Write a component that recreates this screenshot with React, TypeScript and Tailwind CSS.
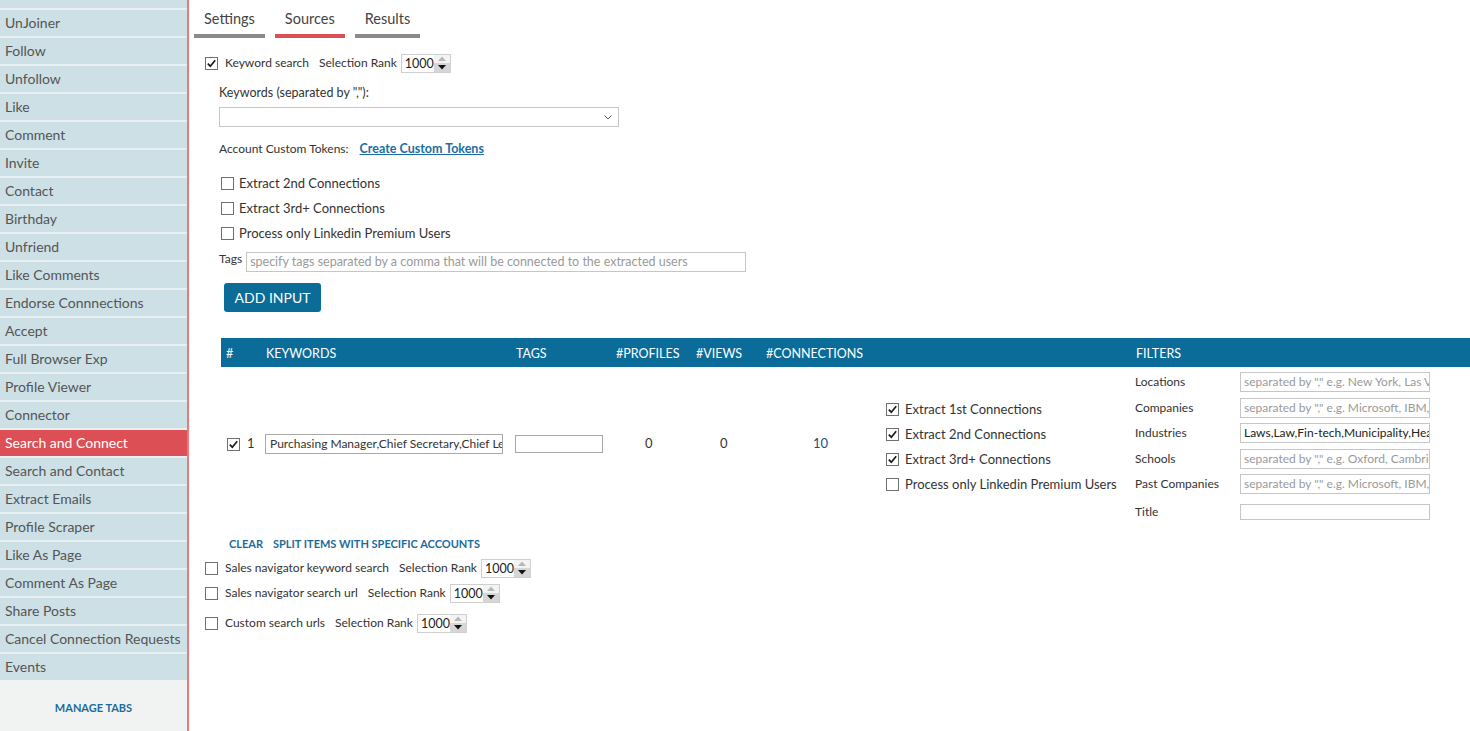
import React from 'react';

const sideItems = [
  'UnJoiner', 'Follow', 'Unfollow', 'Like', 'Comment', 'Invite', 'Contact', 'Birthday', 'Unfriend',
  'Like Comments', 'Endorse Connnections', 'Accept', 'Full Browser Exp', 'Profile Viewer', 'Connector',
  'Search and Connect', 'Search and Contact', 'Extract Emails', 'Profile Scraper', 'Like As Page',
  'Comment As Page', 'Share Posts', 'Cancel Connection Requests', 'Events',
];

const Check: React.FC<{ on?: boolean }> = ({ on }) => (
  <span className="w-[13px] h-[13px] border border-[#707070] bg-white flex items-center justify-center shrink-0">
    {on && (
      <svg width="11" height="11" viewBox="0 0 11 11">
        <path d="M1.8 5.6 L4.3 8.2 L9.2 2.2" fill="none" stroke="#1a1a1a" strokeWidth="1.7" />
      </svg>
    )}
  </span>
);

const Spinner: React.FC = () => (
  <div className="flex h-[19px] w-[50px] border border-[#cfcfcf] bg-white">
    <span className="flex-1 pl-[3px] leading-[17px] text-[12.5px] text-[#222]">1000</span>
    <div className="w-[16px] flex flex-col">
      <div className="h-[8px] flex items-center justify-center bg-[#f3f3f3]">
        <svg width="8" height="5" viewBox="0 0 8 5"><path d="M0 5 L4 0.5 L8 5 Z" fill="#b8b8b8" /></svg>
      </div>
      <div className="flex-1 flex items-center justify-center bg-[#d6d6d6]">
        <svg width="8" height="5" viewBox="0 0 8 5"><path d="M0 0 L4 4.5 L8 0 Z" fill="#111" /></svg>
      </div>
    </div>
  </div>
);

const filters: { label: string; text: string; filled?: boolean }[] = [
  { label: 'Locations', text: 'separated by "," e.g. New York, Las Vegas' },
  { label: 'Companies', text: 'separated by "," e.g. Microsoft, IBM, Google' },
  { label: 'Industries', text: 'Laws,Law,Fin-tech,Municipality,Health care', filled: true },
  { label: 'Schools', text: 'separated by "," e.g. Oxford, Cambridge' },
  { label: 'Past Companies', text: 'separated by "," e.g. Microsoft, IBM, Google' },
];

const SourceRow: React.FC<{ label: string; on?: boolean; className?: string }> = ({ label, on, className }) => (
  <div className={'h-[20px] flex items-center text-[12px] ' + (className ?? '')}>
    <Check on={on} />
    <span className="ml-[7px]">{label}</span>
    <span className="ml-[10px] mr-[4px]">Selection Rank</span>
    <Spinner />
  </div>
);

const App: React.FC = () => {
  return (
    <div className="w-[1470px] h-[731px] overflow-hidden flex bg-white text-[#333] font-['Lato',sans-serif] text-[13px]">
      {/* Sidebar */}
      <aside className="w-[189px] shrink-0 flex flex-col bg-[#f1f3f3] border-r-2 border-[#e97a7a]">
        <div className="-mt-[18px] flex flex-col">
          <div className="h-[26px] bg-[#cde0e6] px-[5px] leading-[26px] text-[14px] text-[#555]">Joiner</div>
          {sideItems.map((s) => (
            <div
              key={s}
              className={
                'h-[28px] border-t-2 border-[#e6eff2] px-[5px] leading-[26px] text-[14px] whitespace-nowrap ' +
                (s === 'Search and Connect' ? 'bg-[#dc4f55] text-white' : 'bg-[#cde0e6] text-[#555]')
              }
            >
              {s}
            </div>
          ))}
        </div>
        <div className="flex-1 flex items-center justify-center pt-[6px]">
          <span className="text-[11px] font-bold text-[#1b6c9c]">MANAGE TABS</span>
        </div>
      </aside>

      {/* Main */}
      <main className="flex-1 flex flex-col">
        {/* Tabs */}
        <div className="flex gap-[10px] pl-[5px] pt-[4px]">
          <div className="h-[34px] px-[10px] border-b-4 border-[#8a8a8a] flex items-center text-[14.5px] text-[#444]">Settings</div>
          <div className="h-[34px] px-[10px] border-b-4 border-[#dc4f55] flex items-center text-[14.5px] text-[#444]">Sources</div>
          <div className="h-[34px] px-[10px] border-b-4 border-[#8a8a8a] flex items-center text-[14.5px] text-[#444]">Results</div>
        </div>

        {/* Keyword search */}
        <SourceRow label="Keyword search" on className="mt-[15px] ml-[16px]" />

        <div className="mt-[12px] ml-[30px] h-[16px] leading-[16px] text-[12.5px]">Keywords (separated by ","):</div>
        <div className="mt-[6px] ml-[30px] w-[400px] h-[20px] border border-[#c6c6c6] flex items-center justify-end pr-[6px]">
          <svg width="8" height="5" viewBox="0 0 8 5"><path d="M0.5 0.5 L4 4 L7.5 0.5" fill="none" stroke="#555" strokeWidth="1" /></svg>
        </div>

        <div className="mt-[14px] ml-[30px] h-[16px] flex items-center text-[12px]">
          <span>Account Custom Tokens:</span>
          <span className="ml-[11px] font-bold underline text-[#1b6ea0] text-[12.5px]">Create Custom Tokens</span>
        </div>

        <div className="mt-[14px] ml-[32px] flex flex-col">
          {['Extract 2nd Connections', 'Extract 3rd+ Connections', 'Process only Linkedin Premium Users'].map((t) => (
            <div key={t} className="h-[25px] flex items-center">
              <Check />
              <span className="ml-[5px]">{t}</span>
            </div>
          ))}
        </div>

        <div className="mt-[6px] ml-[30px] flex items-start">
          <span className="text-[12px] leading-[14px]">Tags</span>
          <div className="ml-[4px] w-[500px] h-[20px] border border-[#c6c6c6] px-[3px] leading-[18px] text-[12.5px] text-[#9a9a9a]">
            specify tags separated by a comma that will be connected to the extracted users
          </div>
        </div>

        <div className="mt-[11px] ml-[35px]">
          <button className="w-[97px] h-[29px] rounded-[3px] bg-[#0b6c98] text-white text-[14px]">ADD INPUT</button>
        </div>

        {/* Table */}
        <div className="mt-[26px] ml-[32px]">
          <div className="h-[29px] pt-[3px] bg-[#0b6c9a] text-white text-[12.5px] grid grid-cols-[40px_250px_100px_80px_70px_120px_250px_1fr] items-center">
            <span className="pl-[5px]">#</span>
            <span className="pl-[5px]">KEYWORDS</span>
            <span className="pl-[5px]">TAGS</span>
            <span className="pl-[5px]">#PROFILES</span>
            <span className="pl-[5px]">#VIEWS</span>
            <span className="pl-[5px]">#CONNECTIONS</span>
            <span></span>
            <span className="pl-[5px]">FILTERS</span>
          </div>
          <div className="grid grid-cols-[40px_250px_100px_80px_70px_120px_250px_1fr] items-start pt-[5px]">
            <div className="mt-[62px] h-[20px] pl-[6px] flex items-center">
              <Check on />
              <span className="ml-[7px]">1</span>
            </div>
            <div className="mt-[62px] pl-[4px]">
              <div className="w-[238px] h-[20px] border border-[#a9a9a9] px-[4px] leading-[18px] whitespace-nowrap overflow-hidden text-[12px]">
                Purchasing Manager,Chief Secretary,Chief Legal Officer
              </div>
            </div>
            <div className="mt-[62px] h-[20px] pl-[4px] flex items-center">
              <div className="w-[88px] h-[18px] border border-[#a9a9a9]"></div>
            </div>
            <div className="mt-[62px] h-[20px] pl-[34px] flex items-center">0</div>
            <div className="mt-[62px] h-[20px] pl-[29px] flex items-center">0</div>
            <div className="mt-[62px] h-[20px] pl-[52px] flex items-center text-[#1a4f7a]">10</div>
            <div className="mt-[25px] pl-[5px] flex flex-col">
              {[
                ['Extract 1st Connections', true],
                ['Extract 2nd Connections', true],
                ['Extract 3rd+ Connections', true],
                ['Process only Linkedin Premium Users', false],
              ].map(([t, on]) => (
                <div key={t as string} className="h-[25px] flex items-center">
                  <Check on={on as boolean} />
                  <span className="ml-[6px]">{t as string}</span>
                </div>
              ))}
            </div>
            <div className="pl-[4px] flex flex-col">
              {filters.map((f) => (
                <div key={f.label} className="h-[25.5px] flex items-start">
                  <span className="w-[105px] leading-[20px] text-[12px]">{f.label}</span>
                  <div
                    className={
                      'w-[190px] h-[20px] border border-[#c6c6c6] px-[3px] leading-[18px] whitespace-nowrap overflow-hidden text-[12px] ' +
                      (f.filled ? 'text-[#222]' : 'text-[#9a9a9a]')
                    }
                  >
                    {f.text}
                  </div>
                </div>
              ))}
              <div className="mt-[4px] h-[17px] flex items-center">
                <span className="w-[105px] text-[12px]">Title</span>
                <div className="w-[190px] h-[16px] border border-[#c6c6c6]"></div>
              </div>
            </div>
          </div>
        </div>

        <div className="mt-[15px] ml-[40px] flex gap-[10px] text-[11px] font-bold text-[#1b6c9c]">
          <span>CLEAR</span>
          <span>SPLIT ITEMS WITH SPECIFIC ACCOUNTS</span>
        </div>

        <div className="mt-[6px] ml-[16px] flex flex-col">
          <SourceRow label="Sales navigator keyword search" />
          <SourceRow label="Sales navigator search url" className="mt-[5px]" />
          <SourceRow label="Custom search urls" className="mt-[10px]" />
        </div>
      </main>
    </div>
  );
};

export default App;
